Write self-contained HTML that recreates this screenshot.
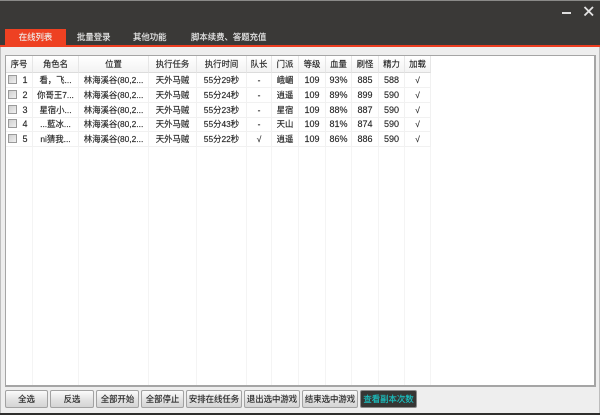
<!DOCTYPE html>
<html lang="zh-CN">
<head>
<meta charset="utf-8">
<style>
html,body{margin:0;padding:0}
body{width:600px;height:415px;overflow:hidden;background:#eeeeee;position:relative;font-family:"Liberation Sans","Noto Sans CJK SC",sans-serif;font-size:9px;color:#222}
.top{position:absolute;left:0;top:0;width:600px;height:45px;background:#3a3937;border-top:1px solid #8a8a88;box-sizing:border-box}
.bar{position:absolute;left:0;top:45px;width:600px;height:2px;background:#ec3d20}
.tab{position:absolute;top:29px;height:16px;line-height:17px;color:#e8e8e8;font-size:8.4px;white-space:nowrap;filter:blur(.3px);-webkit-text-stroke:.15px #e8e8e8}
.tab.on{left:5px;width:61px;background:#ee4122;text-align:center;height:18px;color:#f6e8e2;filter:none}
.min{position:absolute;left:562px;top:12px;width:9px;height:2px;background:#dedede}
.x{position:absolute;left:583px;top:6px}
.box{position:absolute;left:5px;top:55px;width:591px;height:332px;box-sizing:border-box;background:#fff;border:1px solid #a5a5a5;border-right:2px solid #a5a5a5;border-bottom:2px solid #a5a5a5;overflow:hidden}
table{border-collapse:separate;border-spacing:0;table-layout:fixed;width:425px;position:absolute;left:0;top:0;filter:blur(.3px)}
th,td{padding:0;text-align:center;overflow:hidden;white-space:nowrap;font-weight:normal;color:#222;font-size:8.4px;-webkit-text-stroke:.15px #333}
th{height:16px;line-height:16px;border-right:1px solid #e6e6e6;border-bottom:1px solid #dcdcdc;background:linear-gradient(#fff,#f3f3f3)}
td{height:14px;line-height:14px;border-right:1px solid #f1f1f1;border-bottom:1px solid #f1f1f1}
tr.s td{height:13px;line-height:13px}
td.n{font-size:9px}
.cb{display:inline-block;width:7px;height:7px;border:1px solid #9a9a9a;background:linear-gradient(135deg,#d0d0d0,#f0f0f0);vertical-align:-1px;margin-right:5px;margin-left:-2px}
.grid{position:absolute;top:0;bottom:0;width:1px;background:#f4f4f4}
.btn{position:absolute;top:390px;height:18px;box-sizing:border-box;border:1px solid #a2a2a2;border-radius:2px;background:linear-gradient(#fbfbfb,#e2e2e2 55%,#d4d4d4);text-align:center;line-height:16px;font-size:8.4px;color:#222;white-space:nowrap;overflow:hidden;-webkit-text-stroke:.15px #333}
.btn.k{background:#363634;color:#19c4c4;border-color:#8a8a8a;-webkit-text-stroke:.15px #19c4c4}
.foot{position:absolute;left:0;top:413px;width:600px;height:2px;background:#2f2f2d}
.edge{position:absolute;left:0;top:47px;width:1px;height:366px;background:#bdbdbd}
.edge.r{left:599px}
</style>
</head>
<body>
<div class="top"></div>
<div class="bar"></div>
<div class="tab on">在线列表</div>
<div class="tab" style="left:77px">批量登录</div>
<div class="tab" style="left:133px">其他功能</div>
<div class="tab" style="left:191px">脚本续费、答题充值</div>
<div class="min"></div>
<svg class="x" width="11" height="11" viewBox="0 0 11 11"><path d="M1.5 1L10 9.5M10 1L1.5 9.5" stroke="#e4e4e4" stroke-width="1.8" fill="none"/></svg>
<div class="edge"></div><div class="edge r"></div>

<div class="box">
<div class="grid" style="left:26px"></div>
<div class="grid" style="left:72px"></div>
<div class="grid" style="left:142px"></div>
<div class="grid" style="left:190px"></div>
<div class="grid" style="left:240px"></div>
<div class="grid" style="left:265px"></div>
<div class="grid" style="left:292px"></div>
<div class="grid" style="left:319px"></div>
<div class="grid" style="left:345px"></div>
<div class="grid" style="left:372px"></div>
<div class="grid" style="left:398px"></div>
<div class="grid" style="left:424px"></div>
<table>
<colgroup><col style="width:27px"><col style="width:46px"><col style="width:70px"><col style="width:48px"><col style="width:50px"><col style="width:25px"><col style="width:27px"><col style="width:27px"><col style="width:26px"><col style="width:27px"><col style="width:26px"><col style="width:26px"></colgroup>
<tr><th>序号</th><th>角色名</th><th>位置</th><th>执行任务</th><th>执行时间</th><th>队长</th><th>门派</th><th>等级</th><th>血量</th><th>刷怪</th><th>精力</th><th>加载</th></tr>
<tr><td class="n"><span class="cb"></span>1</td><td>看，飞...</td><td>林海溪谷(80,2...</td><td>天外马贼</td><td>55分29秒</td><td>-</td><td>峨嵋</td><td class="n">109</td><td class="n">93%</td><td class="n">885</td><td class="n">588</td><td>√</td></tr>
<tr><td class="n"><span class="cb"></span>2</td><td>你哥王7...</td><td>林海溪谷(80,2...</td><td>天外马贼</td><td>55分24秒</td><td>-</td><td>逍遥</td><td class="n">109</td><td class="n">89%</td><td class="n">899</td><td class="n">590</td><td>√</td></tr>
<tr><td class="n"><span class="cb"></span>3</td><td>星宿小...</td><td>林海溪谷(80,2...</td><td>天外马贼</td><td>55分23秒</td><td>-</td><td>星宿</td><td class="n">109</td><td class="n">88%</td><td class="n">887</td><td class="n">590</td><td>√</td></tr>
<tr class="s"><td class="n"><span class="cb"></span>4</td><td>...藍冰...</td><td>林海溪谷(80,2...</td><td>天外马贼</td><td>55分43秒</td><td>-</td><td>天山</td><td class="n">109</td><td class="n">81%</td><td class="n">874</td><td class="n">590</td><td>√</td></tr>
<tr><td class="n"><span class="cb"></span>5</td><td>ni猜我...</td><td>林海溪谷(80,2...</td><td>天外马贼</td><td>55分22秒</td><td>√</td><td>逍遥</td><td class="n">109</td><td class="n">86%</td><td class="n">886</td><td class="n">590</td><td>√</td></tr>
</table>
</div>

<div class="btn" style="left:5px;width:43px">全选</div>
<div class="btn" style="left:50px;width:44px">反选</div>
<div class="btn" style="left:96px;width:43px">全部开始</div>
<div class="btn" style="left:141px;width:43px">全部停止</div>
<div class="btn" style="left:186px;width:56px">安排在线任务</div>
<div class="btn" style="left:244px;width:56px">退出选中游戏</div>
<div class="btn" style="left:302px;width:56px">结束选中游戏</div>
<div class="btn k" style="left:360px;width:57px">查看副本次数</div>
<div class="foot"></div>
</body>
</html>
